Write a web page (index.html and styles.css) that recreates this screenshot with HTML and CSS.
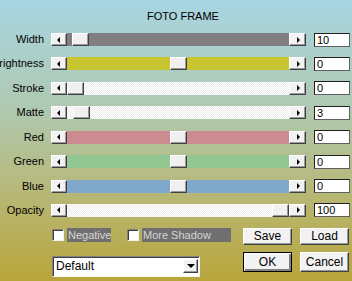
FILE: index.html
```html
<!DOCTYPE html>
<html lang="en">
<head>
    <meta charset="UTF-8">
    <meta name="viewport" content="width=device-width, initial-scale=1.0">
    <title>Foto Frame</title>
    <link rel="stylesheet" href="styles.css">
</head>
<body>
    <h1 class="title">FOTO FRAME</h1>

    <div class="sliders">
        <div class="row">
            <label class="name">Width</label>
            <div class="scroll">
                <span class="arrow-btn left"></span>
                <div class="track gray"><span class="thumb" style="left: 5px"></span></div>
                <span class="arrow-btn right"></span>
            </div>
            <input class="value" type="text" value="10">
        </div>
        <div class="row">
            <label class="name">Brightness</label>
            <div class="scroll">
                <span class="arrow-btn left"></span>
                <div class="track yellow"><span class="thumb" style="left: 103px"></span></div>
                <span class="arrow-btn right"></span>
            </div>
            <input class="value" type="text" value="0">
        </div>
        <div class="row">
            <label class="name">Stroke</label>
            <div class="scroll">
                <span class="arrow-btn left"></span>
                <div class="track plain"><span class="thumb" style="left: 0px"></span></div>
                <span class="arrow-btn right"></span>
            </div>
            <input class="value" type="text" value="0">
        </div>
        <div class="row">
            <label class="name">Matte</label>
            <div class="scroll">
                <span class="arrow-btn left"></span>
                <div class="track plain"><span class="thumb" style="left: 6px"></span></div>
                <span class="arrow-btn right"></span>
            </div>
            <input class="value" type="text" value="3">
        </div>
        <div class="row">
            <label class="name">Red</label>
            <div class="scroll">
                <span class="arrow-btn left"></span>
                <div class="track red"><span class="thumb" style="left: 103px"></span></div>
                <span class="arrow-btn right"></span>
            </div>
            <input class="value" type="text" value="0">
        </div>
        <div class="row">
            <label class="name">Green</label>
            <div class="scroll">
                <span class="arrow-btn left"></span>
                <div class="track green"><span class="thumb" style="left: 103px"></span></div>
                <span class="arrow-btn right"></span>
            </div>
            <input class="value" type="text" value="0">
        </div>
        <div class="row">
            <label class="name">Blue</label>
            <div class="scroll">
                <span class="arrow-btn left"></span>
                <div class="track blue"><span class="thumb" style="left: 103px"></span></div>
                <span class="arrow-btn right"></span>
            </div>
            <input class="value" type="text" value="0">
        </div>
        <div class="row">
            <label class="name">Opacity</label>
            <div class="scroll">
                <span class="arrow-btn left"></span>
                <div class="track plain"><span class="thumb" style="left: 205px"></span></div>
                <span class="arrow-btn right"></span>
            </div>
            <input class="value" type="text" value="100">
        </div>
    </div>

    <div class="footer">
        <div class="checks">
            <label class="check"><span class="box"></span><span class="check-text negative">Negative</span></label>
            <label class="check"><span class="box"></span><span class="check-text shadow">More Shadow</span></label>
        </div>
        <button class="btn">Save</button>
        <button class="btn">Load</button>
        <div class="select"><span class="select-text">Default</span><span class="drop-btn"></span></div>
        <button class="btn default">OK</button>
        <button class="btn">Cancel</button>
    </div>
</body>
</html>
```

FILE: styles.css
```css
body {
    margin: 0;
    width: 352px;
    height: 281px;
    overflow: hidden;
    font-family: "Liberation Sans", Arial, sans-serif;
    font-size: 11px;
    color: #000;
    background: linear-gradient(to bottom, #a8d5e2 0%, #afc9b2 38%, #b7b878 68%, #b9a53a 100%);
}

.title {
    margin: 0;
    padding: 10px 0 0 14px;
    height: 13px;
    line-height: 13px;
    font-size: 11px;
    font-weight: normal;
    text-align: center;
}

.sliders {
    display: flex;
    flex-direction: column;
    gap: 11.43px;
    margin-top: 10px;
}

.row {
    display: flex;
    align-items: center;
    height: 13px;
}

.name {
    width: 44px;
    display: flex;
    justify-content: flex-end;
    white-space: nowrap;
    line-height: 13px;
}

.scroll {
    display: flex;
    width: 255px;
    height: 13px;
    margin-left: 7px;
}

.arrow-btn {
    width: 16px;
    height: 13px;
    box-sizing: border-box;
    display: flex;
    align-items: center;
    justify-content: center;
    background-color: #f2f2f2;
    border: 1px solid;
    border-color: #fff #404040 #404040 #fff;
    box-shadow: inset -1px -1px #9a9a9a;
}

.arrow-btn.right {
    width: 17px;
}

.arrow-btn::before {
    content: "";
    border-top: 3px solid transparent;
    border-bottom: 3px solid transparent;
}

.arrow-btn.left::before {
    border-right: 3px solid #000;
    margin-right: 1px;
}

.arrow-btn.right::before {
    border-left: 3px solid #000;
    margin-left: 1px;
}

.track {
    flex: 1;
    position: relative;
}

.track.gray {
    background-color: #7f7f7f;
}

.track.yellow {
    background-color: #c9c530;
}

.track.red {
    background-color: #cc8b91;
}

.track.green {
    background-color: #92c792;
}

.track.blue {
    background-color: #80a8cb;
}

.track.plain {
    background-color: #fff;
    background-image: repeating-conic-gradient(#fff 0 25%, #ececec 0 50%);
    background-size: 2px 2px;
}

.thumb {
    position: absolute;
    top: 0;
    width: 17px;
    height: 13px;
    box-sizing: border-box;
    background-color: #f0f0f0;
    border: 1px solid;
    border-color: #fff #404040 #404040 #fff;
    box-shadow: inset -1px -1px #9a9a9a;
}

.value {
    margin-left: 8px;
    width: 36px;
    height: 14px;
    box-sizing: border-box;
    padding: 0 2px;
    border: 1px solid;
    border-color: #202020 #606060 #606060 #202020;
    background-color: #fff;
    font-family: inherit;
    font-size: 11px;
    line-height: 12px;
    color: #000;
}

.footer {
    display: grid;
    grid-template-columns: 183px 49px 49px;
    grid-template-rows: 17px 20px;
    column-gap: 8px;
    row-gap: 7px;
    margin: 11px 0 0 52px;
}

.checks {
    display: flex;
    align-items: center;
    gap: 16px;
}

.check {
    display: flex;
    align-items: center;
    gap: 3px;
    height: 14px;
    align-self: start;
}

.box {
    width: 12px;
    height: 12px;
    box-sizing: border-box;
    background-color: #fff;
    border: 1px solid;
    border-color: #808080 #f0f0f0 #f0f0f0 #808080;
    box-shadow: inset 1px 1px #404040;
}

.check-text {
    height: 14px;
    line-height: 14px;
    padding-left: 1px;
    box-sizing: border-box;
    background-color: #6f6f6f;
    color: #d6d6d6;
    white-space: nowrap;
}

.check-text.negative {
    width: 44px;
}

.check-text.shadow {
    width: 89px;
}

.btn {
    padding: 0;
    box-sizing: border-box;
    background-color: #f2f2f2;
    border: 1px solid;
    border-color: #fff #404040 #404040 #fff;
    box-shadow: inset -1px -1px #9a9a9a;
    font-family: inherit;
    font-size: 12px;
    color: #000;
}

.btn.default {
    border-color: #000;
    box-shadow: inset 1px 1px #fff, inset -2px -2px #808080;
}

.select {
    width: 148px;
    height: 21px;
    margin-top: 4px;
    box-sizing: border-box;
    display: flex;
    align-items: center;
    justify-content: space-between;
    padding: 0 1px 0 3px;
    background-color: #fff;
    border: 1px solid;
    border-color: #808080 #f4f4f4 #f4f4f4 #808080;
    box-shadow: inset 1px 1px #404040;
    font-size: 12px;
}

.drop-btn {
    width: 15px;
    height: 14px;
    box-sizing: border-box;
    display: flex;
    align-items: center;
    justify-content: center;
    background-color: #f2f2f2;
    border: 1px solid;
    border-color: #fff #404040 #404040 #fff;
    box-shadow: inset -1px -1px #9a9a9a;
}

.drop-btn::before {
    content: "";
    border-left: 4px solid transparent;
    border-right: 4px solid transparent;
    border-top: 4px solid #000;
}
```
